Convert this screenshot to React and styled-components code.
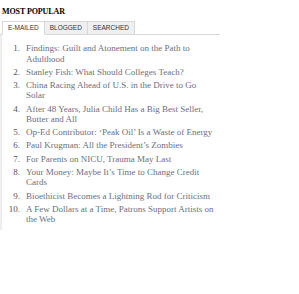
import React, { useState } from 'react';
import styled, { createGlobalStyle } from 'styled-components';

const GlobalStyle = createGlobalStyle`
  body {
    margin: 0;
    background: #fff;
  }
`;

const Panel = styled.div`
  width: 220px;
  padding-top: 7px;
  box-sizing: border-box;
`;

const Title = styled.h3`
  margin: 0 0 4px 2px;
  font-family: "Liberation Serif", "Times New Roman", serif;
  font-size: 8px;
  font-weight: 700;
  line-height: 10px;
  color: #000;
  letter-spacing: -0.1px;
`;

const TabBar = styled.div`
  display: flex;
  padding-left: 2px;
  border-bottom: 1px solid #d8d8d8;
`;

const Tab = styled.button`
  font-family: "Liberation Sans", Arial, sans-serif;
  font-size: 6.5px;
  line-height: 12px;
  text-transform: uppercase;
  color: #333;
  padding: 0 5px;
  margin: 0 0 -1px;
  border: 1px solid #d8d8d8;
  border-left-width: ${({ $first }) => ($first ? '1px' : '0')};
  border-bottom-color: ${({ $active }) => ($active ? '#fff' : '#d8d8d8')};
  background: ${({ $active }) => ($active ? '#fff' : '#efefef')};
  cursor: pointer;
`;

const List = styled.ol`
  list-style: none;
  margin: 0;
  padding: 8px 6px 3px 0;
  border-left: 2px solid #eee;
`;

const Item = styled.li`
  display: flex;
  gap: 6px;
  margin-bottom: 2.7px;
  font-family: "Liberation Serif", Georgia, serif;
  font-size: 9px;
  line-height: 10.5px;
`;

const Num = styled.span`
  flex: 0 0 18px;
  text-align: right;
  color: #555;
`;

const Link = styled.a`
  color: #6b6f80;
  text-decoration: none;
`;

const tabs = ['E-mailed', 'Blogged', 'Searched'];

const stories = [
  'Findings: Guilt and Atonement on the Path to Adulthood',
  'Stanley Fish: What Should Colleges Teach?',
  'China Racing Ahead of U.S. in the Drive to Go Solar',
  'After 48 Years, Julia Child Has a Big Best Seller, Butter and All',
  'Op-Ed Contributor: \u2018Peak Oil\u2019 Is a Waste of Energy',
  'Paul Krugman: All the President\u2019s Zombies',
  'For Parents on NICU, Trauma May Last',
  'Your Money: Maybe It\u2019s Time to Change Credit Cards',
  'Bioethicist Becomes a Lightning Rod for Criticism',
  'A Few Dollars at a Time, Patrons Support Artists on the Web',
];

export default function App() {
  const [active, setActive] = useState(0);
  return (
    <>
      <GlobalStyle />
      <Panel>
        <Title>MOST POPULAR</Title>
        <TabBar>
          {tabs.map((t, i) => (
            <Tab key={t} $first={i === 0} $active={i === active} onClick={() => setActive(i)}>
              {t}
            </Tab>
          ))}
        </TabBar>
        <List>
          {stories.map((s, i) => (
            <Item key={s}>
              <Num>{i + 1}.</Num>
              <Link href="#">{s}</Link>
            </Item>
          ))}
        </List>
      </Panel>
    </>
  );
}
